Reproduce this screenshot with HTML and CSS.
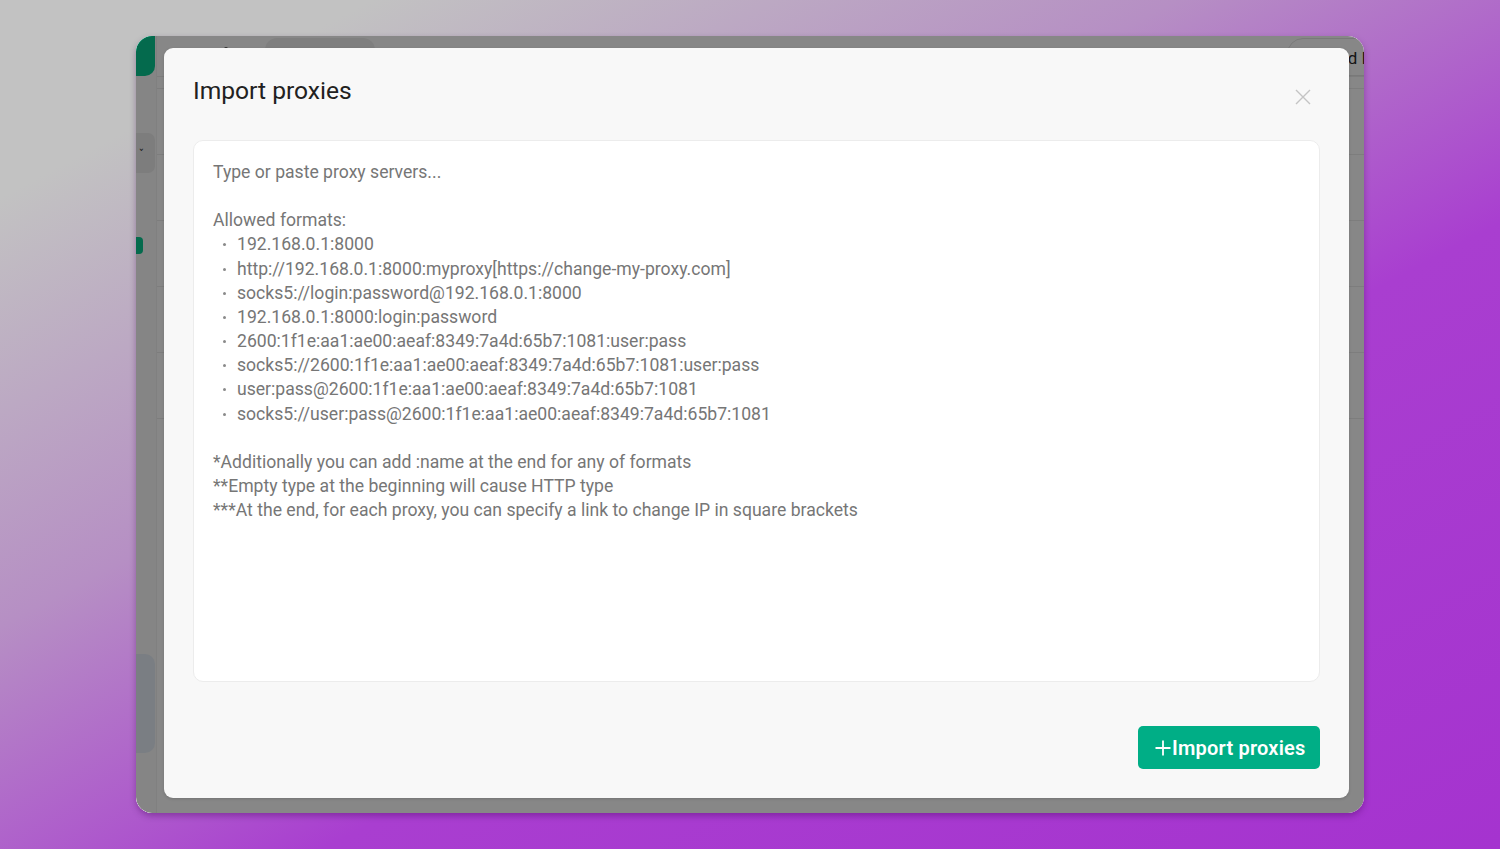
FILE: index.html
```
<!DOCTYPE html>
<html lang="en">
<head>
<meta charset="utf-8">
<title>Import proxies</title>
<link rel="stylesheet" href="styles.css">
</head>
<body>
<div class="window">
  <aside class="sidebar">
    <div class="logo"></div>
    <div class="side-select"><span class="chev">&#8964;</span></div>
    <div class="side-badge"></div>
    <div class="side-spacer"></div>
    <div class="side-card"></div>
  </aside>
  <main class="app-main">
    <div class="topbar">
      <span class="dot"></span>
      <span class="search"></span>
      <span class="grow"></span>
      <span class="top-btn">Add IPs</span>
    </div>
    <div class="rows">
      <div class="row r1"></div>
      <div class="row r2"></div>
      <div class="row"></div>
      <div class="row"></div>
      <div class="row"></div>
      <div class="row"></div>
    </div>
  </main>
  <div class="overlay">
    <section class="modal">
      <header class="modal-head">
        <h1 class="modal-title">Import proxies</h1>
        <button class="close" aria-label="Close">
          <svg width="16" height="16" viewBox="0 0 16 16"><path d="M1 1L15 15M15 1L1 15" stroke="#c4c4c4" stroke-width="1.4" fill="none"/></svg>
        </button>
      </header>
      <div class="input-box">
        <div class="placeholder">
          <p class="line">Type or paste proxy servers...</p>
          <p class="line blank"></p>
          <p class="line">Allowed formats:</p>
          <ul class="formats">
            <li>192.168.0.1:8000</li>
            <li>http://192.168.0.1:8000:myproxy[https://change-my-proxy.com]</li>
            <li>socks5://login:password@192.168.0.1:8000</li>
            <li>192.168.0.1:8000:login:password</li>
            <li>2600:1f1e:aa1:ae00:aeaf:8349:7a4d:65b7:1081:user:pass</li>
            <li>socks5://2600:1f1e:aa1:ae00:aeaf:8349:7a4d:65b7:1081:user:pass</li>
            <li>user:pass@2600:1f1e:aa1:ae00:aeaf:8349:7a4d:65b7:1081</li>
            <li>socks5://user:pass@2600:1f1e:aa1:ae00:aeaf:8349:7a4d:65b7:1081</li>
          </ul>
          <p class="line blank"></p>
          <p class="line">*Additionally you can add :name at the end for any of formats</p>
          <p class="line">**Empty type at the beginning will cause HTTP type</p>
          <p class="line">***At the end, for each proxy, you can specify a link to change IP in square brackets</p>
        </div>
      </div>
      <footer class="modal-foot">
        <button class="primary">
          <svg class="plus" width="16" height="16" viewBox="0 0 16 16"><path d="M8 0.5V15.5M0.5 8H15.5" stroke="#fff" stroke-width="1.8" fill="none"/></svg>
          <span>Import proxies</span>
        </button>
      </footer>
    </section>
  </div>
</div>
</body>
</html>
```
FILE: styles.css
```
* { box-sizing: border-box; }
html, body { margin: 0; padding: 0; }
body {
  width: 1500px;
  height: 849px;
  overflow: hidden;
  background: linear-gradient(152deg, #c2c2c2 12%, #b68fc4 38%, #a93ed0 62%, #a533cf 100%);
  font-family: Roboto, "Noto Sans", "Liberation Sans", sans-serif;
  padding: 36px 136px;
}
.window {
  position: relative;
  width: 1228px;
  height: 777px;
  border-radius: 16px;
  background: #ffffff;
  display: flex;
  overflow: hidden;
  box-shadow: 0 3px 6px rgba(60, 0, 80, 0.35);
}
.sidebar {
  width: 21px;
  display: flex;
  flex-direction: column;
  background: #fbfbfb;
  border-right: 1px solid #f1f1f1;
}
.logo {
  height: 40px;
  width: 19px;
  background: #08c891;
  border-radius: 0 0 10px 0;
}
.side-select {
  margin-top: 57px;
  height: 40px;
  width: 19px;
  background: #ececec;
  border-radius: 0 7px 7px 0;
  font-size: 10px;
  color: #333;
  padding-top: 10px;
  padding-left: 1px;
  line-height: 1;
}
.chev { display: inline-block; transform: scaleX(0.8); }
.side-badge {
  margin-top: 64px;
  height: 17px;
  width: 7px;
  background: #08c891;
  border-radius: 0 4px 4px 0;
}
.side-spacer { flex: 1; }
.side-card {
  height: 99px;
  width: 19px;
  margin-bottom: 60px;
  background: #e6eef8;
  border-radius: 0 10px 10px 0;
}
.app-main {
  flex: 1;
  display: flex;
  flex-direction: column;
}
.topbar {
  height: 41px;
  display: flex;
  align-items: flex-start;
  padding-top: 2px;
  border-bottom: 1px solid #ececec;
}
.dot {
  width: 4px; height: 4px; border-radius: 2px;
  background: #555;
  margin: 9px 0 0 67px;
}
.search {
  width: 110px; height: 26px;
  border-radius: 12px;
  background: #f0f0f0;
  margin-left: 37px;
}
.grow { flex: 1; }
.top-btn {
  width: 120px;
  height: 38px;
  margin-right: -43px;
  border: 1px solid #e4e4e4;
  border-radius: 16px;
  font-size: 17px;
  color: #2a2a2a;
  line-height: 38px;
  padding-left: 39px;
  white-space: nowrap;
  overflow: hidden;
}
.rows { display: flex; flex-direction: column; }
.row { height: 66px; border-bottom: 1px solid #ececec; }
.r1 { height: 12px; }
.r2 { height: 66px; }
.overlay {
  position: absolute;
  inset: 0;
  background: rgba(0, 0, 0, 0.47);
  border-radius: 16px;
  padding: 12px 0 0 28px;
}
.modal {
  width: 1185px;
  height: 750px;
  background: #f8f8f8;
  border-radius: 9px;
  padding: 29px;
  display: flex;
  flex-direction: column;
  box-shadow: 0 1px 3px rgba(0,0,0,0.15);
}
.modal-head {
  height: 63px;
  display: flex;
  justify-content: space-between;
  align-items: flex-start;
}
.modal-title {
  margin: 0;
  font-size: 24.6px;
  line-height: 28px;
  font-weight: 400;
  color: #212121;
}
.close {
  margin: 12px 9px 0 0;
  padding: 0;
  border: 0;
  background: transparent;
  width: 16px;
  height: 16px;
  display: flex;
}
.input-box {
  height: 542px;
  background: #ffffff;
  border: 1px solid #ececec;
  border-radius: 10px;
  padding: 19px 19px;
}
.placeholder {
  color: #767676;
  font-size: 17.6px;
  line-height: 24.15px;
}
.line { margin: 0; }
.blank { height: 24.15px; }
.formats {
  list-style: none;
  margin: 0;
  padding: 0 0 0 24px;
}
.formats li { position: relative; }
.formats li::before {
  content: "";
  position: absolute;
  left: -14px;
  top: 11px;
  width: 3px;
  height: 3px;
  border-radius: 50%;
  background: #8a8a8a;
}
.modal-foot {
  margin-top: 44px;
  display: flex;
  justify-content: flex-end;
}
.primary {
  height: 43px;
  width: 182px;
  border: 0;
  border-radius: 5px;
  background: #00ae86;
  color: #ffffff;
  font-family: Roboto, "Noto Sans", "Liberation Sans", sans-serif;
  font-size: 20px;
  font-weight: 600;
  letter-spacing: 0.2px;
  display: flex;
  align-items: center;
  padding: 0 0 0 17px;
  gap: 1px;
}
.plus { flex: none; }
```
